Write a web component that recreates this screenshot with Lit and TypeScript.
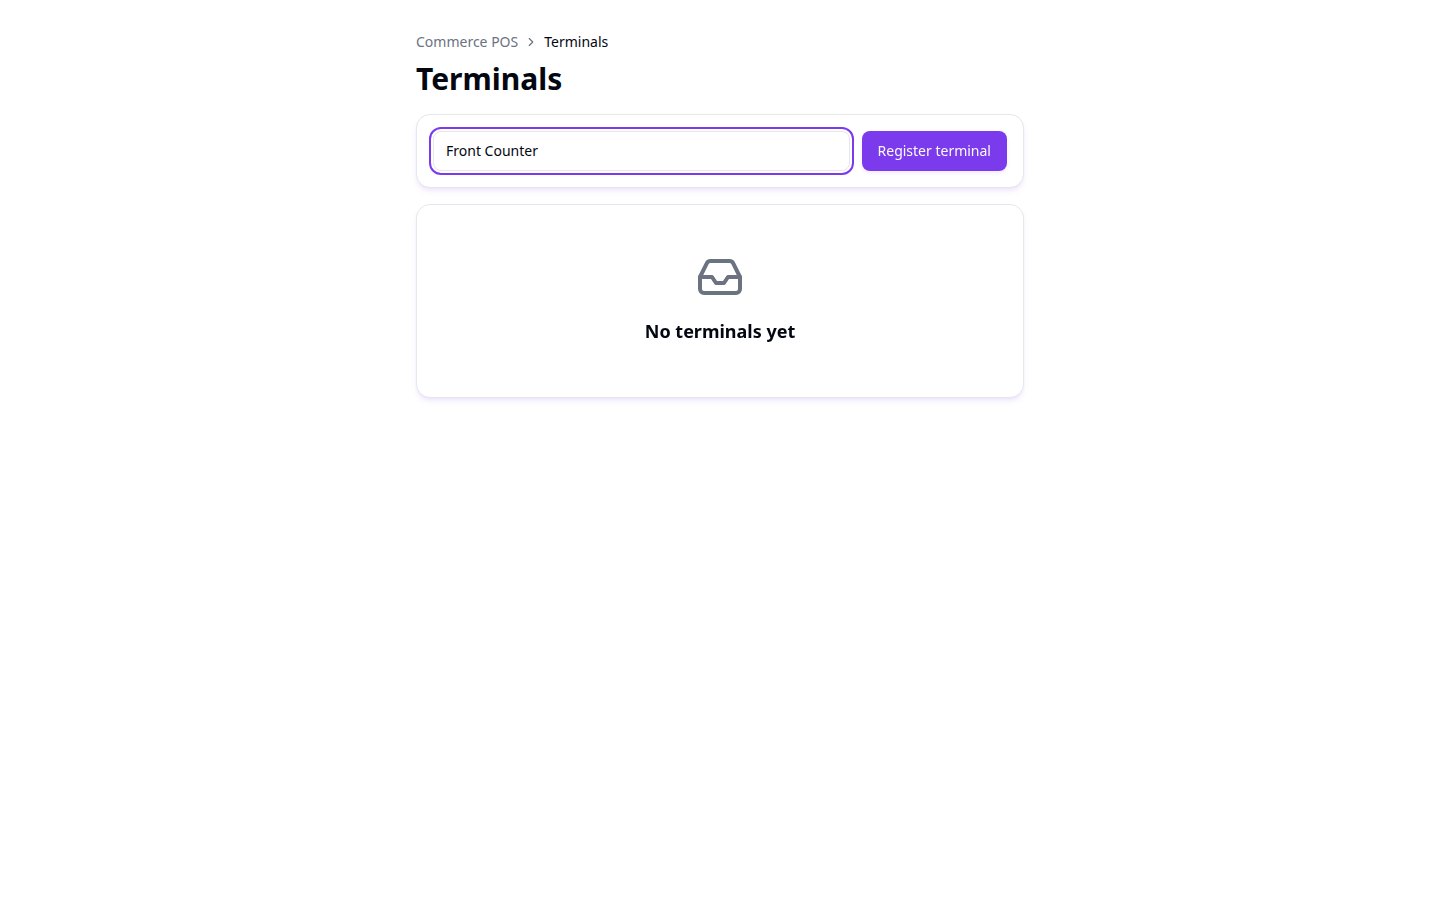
import { LitElement, html, css } from "lit";
import { customElement, state, query } from "lit/decorators.js";

@customElement("app-root")
export class AppRoot extends LitElement {
  static styles = css`
    :host {
      display: block;
      min-height: 100vh;
      background: #ffffff;
      color: #030712;
      font-family: "Noto Sans", sans-serif;
      font-size: 14px;
      line-height: 20px;
    }
    *,
    *::before,
    *::after {
      box-sizing: border-box;
    }
    .page {
      display: flex;
      flex-direction: column;
      gap: 16px;
      max-width: 672px;
      margin: 0 auto;
      padding: 32px;
    }
    .header {
      display: flex;
      flex-direction: column;
      gap: 8px;
    }
    .crumbs {
      display: flex;
      align-items: center;
      gap: 6px;
      margin: 0;
      padding: 0;
      list-style: none;
      color: #6b7280;
    }
    .crumb {
      display: flex;
      align-items: center;
      gap: 6px;
    }
    .crumb-link {
      color: inherit;
      text-decoration: none;
    }
    .crumb-link:hover,
    .crumb-current {
      color: #030712;
    }
    .chevron {
      display: block;
      width: 14px;
      height: 14px;
    }
    .title {
      margin: 0;
      font-size: 30px;
      line-height: 38px;
      font-weight: 700;
    }
    .card {
      border: 1px solid #e5e7eb;
      border-radius: 14px;
      background: #ffffff;
      box-shadow:
        0 4px 6px -1px rgba(124, 58, 237, 0.1),
        0 2px 4px -2px rgba(124, 58, 237, 0.1);
    }
    .form {
      display: flex;
      gap: 12px;
      padding: 16px;
    }
    .field {
      flex: 1;
      min-width: 0;
      height: 40px;
      padding: 8px 12px 10px;
      border: 1px solid #e5e7eb;
      border-radius: 8px;
      background: #ffffff;
      color: inherit;
      font: inherit;
    }
    .field:focus-visible {
      outline: 2px solid #7c3aed;
      outline-offset: 2px;
    }
    .button {
      height: 40px;
      padding: 0 16px;
      border: 0;
      border-radius: 8px;
      background: #7c3aed;
      color: #f9fafb;
      font: inherit;
      white-space: nowrap;
      cursor: pointer;
      box-shadow: 0 2px 4px rgba(124, 58, 237, 0.1);
    }
    .empty {
      display: flex;
      flex-direction: column;
      align-items: center;
      gap: 16px;
      padding: 48px;
    }
    .inbox {
      width: 48px;
      height: 48px;
      color: #6b7280;
    }
    .empty-title {
      margin: 0 0 4px;
      font-size: 18px;
      line-height: 28px;
      font-weight: 700;
      text-align: center;
    }
  `;

  @state() private name = "Front Counter";
  @query(".field") private field!: HTMLInputElement;

  firstUpdated() {
    this.field.focus();
  }

  private onInput(e: Event) {
    this.name = (e.target as HTMLInputElement).value;
  }

  render() {
    return html`
      <main class="page">
        <header class="header">
          <nav aria-label="Breadcrumb">
            <ol class="crumbs">
              <li class="crumb">
                <a class="crumb-link" href="#">Commerce POS</a>
              </li>
              <li class="crumb">
                <svg class="chevron" viewBox="0 0 24 24" fill="none" stroke="currentColor" stroke-width="2" stroke-linecap="round" stroke-linejoin="round" aria-hidden="true">
                  <path d="m9 18 6-6-6-6" />
                </svg>
                <span class="crumb-current" aria-current="page">Terminals</span>
              </li>
            </ol>
          </nav>
          <h1 class="title">Terminals</h1>
        </header>
        <form class="card form" @submit=${(e: Event) => e.preventDefault()}>
          <input class="field" type="text" aria-label="Terminal name" .value=${this.name} @input=${this.onInput} />
          <button class="button" type="submit">Register terminal</button>
        </form>
        <section class="card empty">
          <svg class="inbox" viewBox="0 0 24 24" fill="none" stroke="currentColor" stroke-width="2" stroke-linecap="round" stroke-linejoin="round" aria-hidden="true">
            <polyline points="22 12 16 12 14 15 10 15 8 12 2 12" />
            <path d="M5.45 5.11 2 12v6a2 2 0 0 0 2 2h16a2 2 0 0 0 2-2v-6l-3.45-6.89A2 2 0 0 0 16.76 4H7.24a2 2 0 0 0-1.79 1.11z" />
          </svg>
          <h2 class="empty-title">No terminals yet</h2>
        </section>
      </main>
    `;
  }
}
